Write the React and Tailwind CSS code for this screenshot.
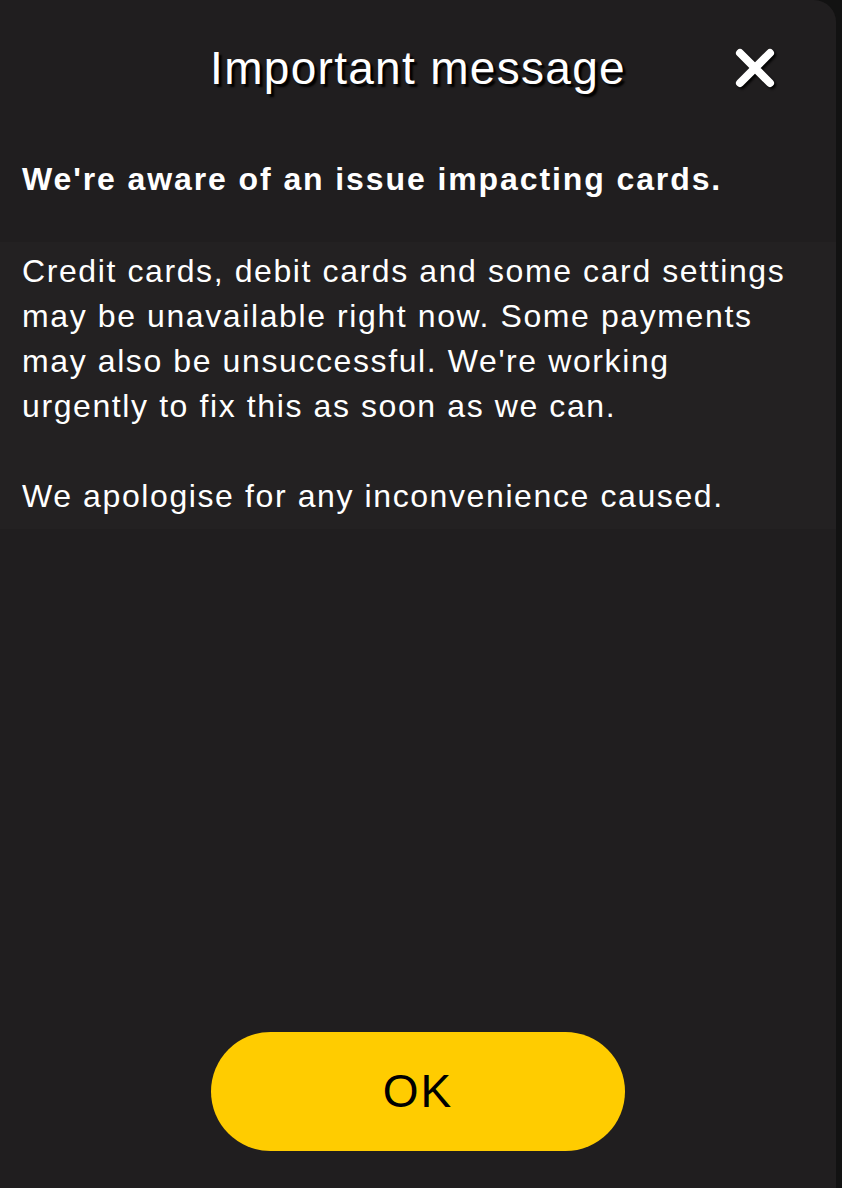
import React from 'react';

const FONT = { fontFamily: '"Liberation Sans", Arial, sans-serif' };

function CloseIcon() {
  return (
    <svg width="42" height="42" viewBox="0 0 42 42" className="drop-shadow-[2px_2px_1px_rgba(0,0,0,0.9)]">
      <path d="M6 6 L36 36 M36 6 L6 36" stroke="#ffffff" strokeWidth="8" strokeLinecap="round" />
    </svg>
  );
}

export default function App() {
  return (
    <div className="w-[842px] h-[1188px] bg-[#121212] flex" style={FONT}>
      <div className="w-[836px] h-full bg-[#201e1f] rounded-tr-[22px] flex flex-col">
        <div className="relative flex items-center justify-center pt-[36px] h-[100px]">
          <h1 className="text-[46px] leading-none tracking-[1.3px] text-white [text-shadow:3px_3px_2px_#000]">
            Important message
          </h1>
          <button className="absolute right-[60px] top-[47px]">
            <CloseIcon />
          </button>
        </div>

        <div className="pt-[57px] text-white">
          <p className="px-[22px] text-[32px] font-bold leading-[44px] tracking-[1.9px]">
            We're aware of an issue impacting cards.
          </p>
          <div className="mt-[41px] pt-[7px] text-[32px] leading-[45px] tracking-[1.6px] bg-[#232122] px-[22px]">
            <p className="max-w-[772px]">
              Credit cards, debit cards and some card settings may be unavailable right now. Some payments
              may also be unsuccessful. We're working urgently to fix this as soon as we can.
            </p>
            <p className="mt-[45px] pb-[10px]">We apologise for any inconvenience caused.</p>
          </div>
        </div>

        <div className="mt-auto flex justify-center pb-[37px]">
          <button className="w-[414px] h-[119px] rounded-full bg-[#ffcc00] text-black text-[46px] tracking-[2px]">
            OK
          </button>
        </div>
      </div>
    </div>
  );
}
